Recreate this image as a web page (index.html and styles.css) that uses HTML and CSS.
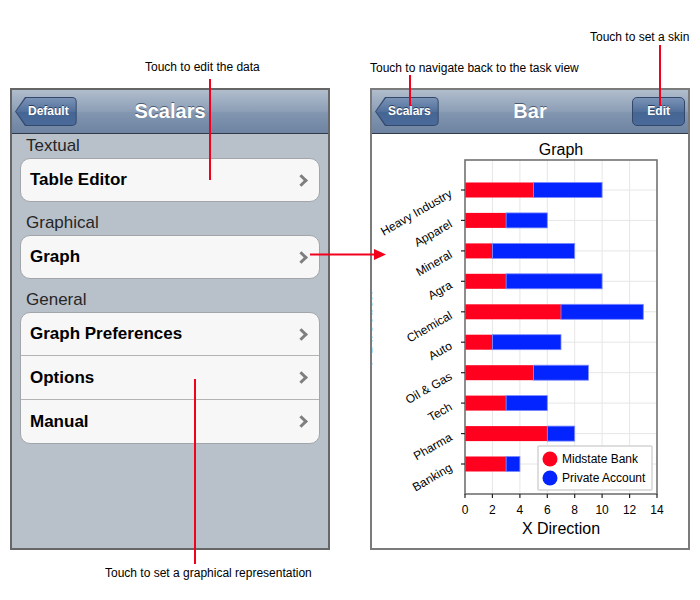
FILE: index.html
```html
<!DOCTYPE html>
<html lang="en">
<head>
    <meta charset="UTF-8">
    <meta name="viewport" content="width=device-width, initial-scale=1.0">
    <title>Scalars - Bar</title>
    <link rel="stylesheet" href="styles.css">
</head>
<body>

<div class="stage">

    <div class="phones">

        <!-- Scalars : task list -->
        <div class="phone">
            <div class="navbar">
                <a class="nav-back"><span>Default</span></a>
                <h1>Scalars</h1>
                <span></span>
            </div>
            <div class="grouped">
                <p class="section-title">Textual</p>
                <ul class="group">
                    <li>Table Editor</li>
                </ul>
                <p class="section-title">Graphical</p>
                <ul class="group">
                    <li>Graph</li>
                </ul>
                <p class="section-title">General</p>
                <ul class="group">
                    <li>Graph Preferences</li>
                    <li>Options</li>
                    <li>Manual</li>
                </ul>
            </div>
        </div>

        <!-- Bar : graph view -->
        <div class="phone phone-right">
            <div class="navbar">
                <a class="nav-back"><span>Scalars</span></a>
                <h1>Bar</h1>
                <a class="nav-btn">Edit</a>
            </div>
            <div class="chart-view">
                <svg class="chart" width="316" height="413" viewBox="0 0 316 413">
                    <text class="chart-title" x="189" y="21" text-anchor="middle">Graph</text>
                    <text class="axis-title" transform="translate(0 196) rotate(-90)" text-anchor="middle">Y Direction</text>

                    <g class="grid">
                        <line x1="120.4" y1="26" x2="120.4" y2="360"/>
                        <line x1="147.9" y1="26" x2="147.9" y2="360"/>
                        <line x1="175.3" y1="26" x2="175.3" y2="360"/>
                        <line x1="202.7" y1="26" x2="202.7" y2="360"/>
                        <line x1="230.1" y1="26" x2="230.1" y2="360"/>
                        <line x1="257.6" y1="26" x2="257.6" y2="360"/>
                        <line x1="93" y1="56" x2="285" y2="56"/>
                        <line x1="93" y1="86.4" x2="285" y2="86.4"/>
                        <line x1="93" y1="116.9" x2="285" y2="116.9"/>
                        <line x1="93" y1="147.3" x2="285" y2="147.3"/>
                        <line x1="93" y1="177.8" x2="285" y2="177.8"/>
                        <line x1="93" y1="208.2" x2="285" y2="208.2"/>
                        <line x1="93" y1="238.7" x2="285" y2="238.7"/>
                        <line x1="93" y1="269.1" x2="285" y2="269.1"/>
                        <line x1="93" y1="299.6" x2="285" y2="299.6"/>
                        <line x1="93" y1="330" x2="285" y2="330"/>
                    </g>

                    <!-- Midstate Bank / Private Account -->
                    <g class="bars">
                        <rect class="red" x="93" y="48.5" width="68.6" height="15"/>
                        <rect class="blue" x="161.6" y="48.5" width="68.5" height="15"/>
                        <rect class="red" x="93" y="78.9" width="41.1" height="15"/>
                        <rect class="blue" x="134.1" y="78.9" width="41.2" height="15"/>
                        <rect class="red" x="93" y="109.4" width="27.4" height="15"/>
                        <rect class="blue" x="120.4" y="109.4" width="82.3" height="15"/>
                        <rect class="red" x="93" y="139.8" width="41.1" height="15"/>
                        <rect class="blue" x="134.1" y="139.8" width="96" height="15"/>
                        <rect class="red" x="93" y="170.3" width="96" height="15"/>
                        <rect class="blue" x="189" y="170.3" width="82.3" height="15"/>
                        <rect class="red" x="93" y="200.7" width="27.4" height="15"/>
                        <rect class="blue" x="120.4" y="200.7" width="68.6" height="15"/>
                        <rect class="red" x="93" y="231.2" width="68.6" height="15"/>
                        <rect class="blue" x="161.6" y="231.2" width="54.8" height="15"/>
                        <rect class="red" x="93" y="261.6" width="41.1" height="15"/>
                        <rect class="blue" x="134.1" y="261.6" width="41.2" height="15"/>
                        <rect class="red" x="93" y="292.1" width="82.3" height="15"/>
                        <rect class="blue" x="175.3" y="292.1" width="27.4" height="15"/>
                        <rect class="red" x="93" y="322.5" width="41.1" height="15"/>
                        <rect class="blue" x="134.1" y="322.5" width="13.8" height="15"/>
                    </g>

                    <rect class="frame" x="93" y="26" width="192" height="334"/>

                    <g class="ticks">
                        <line x1="89" y1="56" x2="93" y2="56"/>
                        <line x1="89" y1="86.4" x2="93" y2="86.4"/>
                        <line x1="89" y1="116.9" x2="93" y2="116.9"/>
                        <line x1="89" y1="147.3" x2="93" y2="147.3"/>
                        <line x1="89" y1="177.8" x2="93" y2="177.8"/>
                        <line x1="89" y1="208.2" x2="93" y2="208.2"/>
                        <line x1="89" y1="238.7" x2="93" y2="238.7"/>
                        <line x1="89" y1="269.1" x2="93" y2="269.1"/>
                        <line x1="89" y1="299.6" x2="93" y2="299.6"/>
                        <line x1="89" y1="330" x2="93" y2="330"/>
                        <line x1="93" y1="360" x2="93" y2="364"/>
                        <line x1="120.4" y1="360" x2="120.4" y2="364"/>
                        <line x1="147.9" y1="360" x2="147.9" y2="364"/>
                        <line x1="175.3" y1="360" x2="175.3" y2="364"/>
                        <line x1="202.7" y1="360" x2="202.7" y2="364"/>
                        <line x1="230.1" y1="360" x2="230.1" y2="364"/>
                        <line x1="257.6" y1="360" x2="257.6" y2="364"/>
                        <line x1="285" y1="360" x2="285" y2="364"/>
                    </g>

                    <g class="tick-label" text-anchor="middle">
                        <text x="93" y="380">0</text>
                        <text x="120.4" y="380">2</text>
                        <text x="147.9" y="380">4</text>
                        <text x="175.3" y="380">6</text>
                        <text x="202.7" y="380">8</text>
                        <text x="230.1" y="380">10</text>
                        <text x="257.6" y="380">12</text>
                        <text x="285" y="380">14</text>
                    </g>

                    <g class="tick-label" text-anchor="end">
                        <text x="81" y="62" transform="rotate(-30 81 62)">Heavy Industry</text>
                        <text x="81" y="92.4" transform="rotate(-30 81 92.4)">Apparel</text>
                        <text x="81" y="122.9" transform="rotate(-30 81 122.9)">Mineral</text>
                        <text x="81" y="153.3" transform="rotate(-30 81 153.3)">Agra</text>
                        <text x="81" y="183.8" transform="rotate(-30 81 183.8)">Chemical</text>
                        <text x="81" y="214.2" transform="rotate(-30 81 214.2)">Auto</text>
                        <text x="81" y="244.7" transform="rotate(-30 81 244.7)">Oil &amp; Gas</text>
                        <text x="81" y="275.1" transform="rotate(-30 81 275.1)">Tech</text>
                        <text x="81" y="305.6" transform="rotate(-30 81 305.6)">Pharma</text>
                        <text x="81" y="336" transform="rotate(-30 81 336)">Banking</text>
                    </g>

                    <g class="legend">
                        <rect x="166" y="312" width="114" height="44" rx="1"/>
                        <circle class="red" cx="178" cy="325" r="7.5"/>
                        <text x="190" y="329">Midstate Bank</text>
                        <circle class="blue" cx="178" cy="344" r="7.5"/>
                        <text x="190" y="348">Private Account</text>
                    </g>

                    <text class="axis-title" x="189" y="400" text-anchor="middle">X Direction</text>
                </svg>
            </div>
        </div>

    </div>

    <!-- Annotations -->
    <svg class="callouts" width="700" height="600" viewBox="0 0 700 600">
        <line x1="210" y1="79" x2="210" y2="180"/>
        <line x1="660" y1="45" x2="660" y2="106"/>
        <line x1="410" y1="75" x2="410" y2="106"/>
        <line x1="195" y1="379" x2="195" y2="564"/>
        <line x1="310" y1="254.5" x2="376" y2="254.5"/>
        <polygon points="374,249 386,254.5 374,260"/>
    </svg>

    <p class="note note-edit">Touch to edit the data</p>
    <p class="note note-skin">Touch to set a skin</p>
    <p class="note note-back">Touch to navigate back to the task view</p>
    <p class="note note-graph">Touch to set a graphical representation</p>

</div>

</body>
</html>
```

FILE: styles.css
```css
/* General */
body {
    margin: 0;
    background: #fff;
    font-family: "Liberation Sans", Arial, sans-serif;
}
.stage {
    position: relative;
    width: 700px;
    height: 600px;
}
.phones {
    display: flex;
    gap: 40px;
    padding: 88px 0 0 10px;
}
.phone {
    width: 320px;
    height: 462px;
    box-sizing: border-box;
    border: 2px solid #666;
    display: flex;
    flex-direction: column;
    overflow: hidden;
}
.phone-right {
    border-color: #7b7b7b;
}

/* Navigation bar */
.navbar {
    height: 43px;
    flex-shrink: 0;
    border-bottom: 1px solid #2f3947;
    background: linear-gradient(#b1bdcd, #8c9eb6 50%, #8397b1 51%, #6d83a1);
    display: grid;
    grid-template-columns: 1fr auto 1fr;
    align-items: center;
}
.navbar h1 {
    margin: 0;
    font-size: 20px;
    color: #fff;
    text-shadow: 0 -1px 0 #4b5b72;
}
.nav-back, .nav-btn {
    font-size: 12px;
    font-weight: bold;
    color: #fff;
    text-shadow: 0 -1px 0 #2c3e5a;
}
.nav-back {
    justify-self: start;
    margin-left: 3px;
    padding: 1px;
    background: #33476a;
    border-radius: 0 5px 5px 0;
    clip-path: polygon(10px 0, 100% 0, 100% 100%, 10px 100%, 0 50%);
}
.nav-back span {
    display: block;
    height: 27px;
    line-height: 27px;
    padding: 0 7px 0 12px;
    background: linear-gradient(#7a93b6, #52709c 50%, #456593 51%, #4a6a9b);
    border-radius: 0 4px 4px 0;
    clip-path: polygon(10px 0, 100% 0, 100% 100%, 10px 100%, 0 50%);
}
.nav-btn {
    justify-self: end;
    margin-right: 3px;
    height: 29px;
    box-sizing: border-box;
    line-height: 27px;
    padding: 0 14px;
    border: 1px solid #33476a;
    border-radius: 5px;
    background: linear-gradient(#7a93b6, #52709c 50%, #456593 51%, #4a6a9b);
}

/* Grouped table */
.grouped {
    flex: 1;
    background: #b8c0ca;
    padding: 1px 8px 0;
}
.section-title {
    margin: 0 0 1px;
    padding-left: 6px;
    font-size: 17px;
    line-height: 22px;
    color: #262626;
}
.group {
    margin: 0 0 10px;
    padding: 0;
    list-style: none;
    background: #f7f7f7;
    border: 1px solid #a2a6ab;
    border-radius: 10px;
}
.group li {
    height: 42px;
    display: flex;
    align-items: center;
    padding: 0 12px 0 9px;
    font-size: 17px;
    font-weight: bold;
    color: #000;
}
.group li + li {
    height: 43px;
    border-top: 1px solid #b3b3b3;
}
.group li::after {
    content: "";
    margin-left: auto;
    margin-right: 1px;
    width: 6px;
    height: 6px;
    border-top: 3px solid #7f7f7f;
    border-right: 3px solid #7f7f7f;
    transform: rotate(45deg);
}

/* Chart */
.chart-view {
    flex: 1;
    background: #fff;
}
.chart {
    display: block;
    font-family: "Liberation Sans", Arial, sans-serif;
}
.chart-title, .axis-title {
    font-size: 16px;
    fill: #000;
}
.grid line {
    stroke: #e6e6e6;
    stroke-width: 1;
}
.bars .red {
    fill: #ff001e;
}
.bars .blue {
    fill: #0424ff;
    stroke: #7c8cff;
    stroke-width: 0.8;
}
.frame {
    fill: none;
    stroke: #727272;
    stroke-width: 1.6;
}
.ticks line {
    stroke: #222;
    stroke-width: 1.2;
}
.tick-label {
    font-size: 12px;
    fill: #000;
}
.legend rect {
    fill: #fff;
    stroke: #d4d4d4;
    stroke-width: 1.5;
}
.legend .red {
    fill: #ff001e;
}
.legend .blue {
    fill: #0424ff;
}
.legend text {
    font-size: 12px;
    fill: #000;
}

/* Annotations */
.callouts {
    position: absolute;
    left: 0;
    top: 0;
    pointer-events: none;
}
.callouts line {
    stroke: #f2001c;
    stroke-width: 2;
}
.callouts polygon {
    fill: #f2001c;
}
.note {
    position: absolute;
    margin: 0;
    font-size: 12px;
    line-height: 14px;
    color: #000;
    white-space: nowrap;
}
.note-edit {
    left: 145px;
    top: 60px;
}
.note-skin {
    left: 590px;
    top: 30px;
}
.note-back {
    left: 370px;
    top: 61px;
}
.note-graph {
    left: 105px;
    top: 566px;
}
```
